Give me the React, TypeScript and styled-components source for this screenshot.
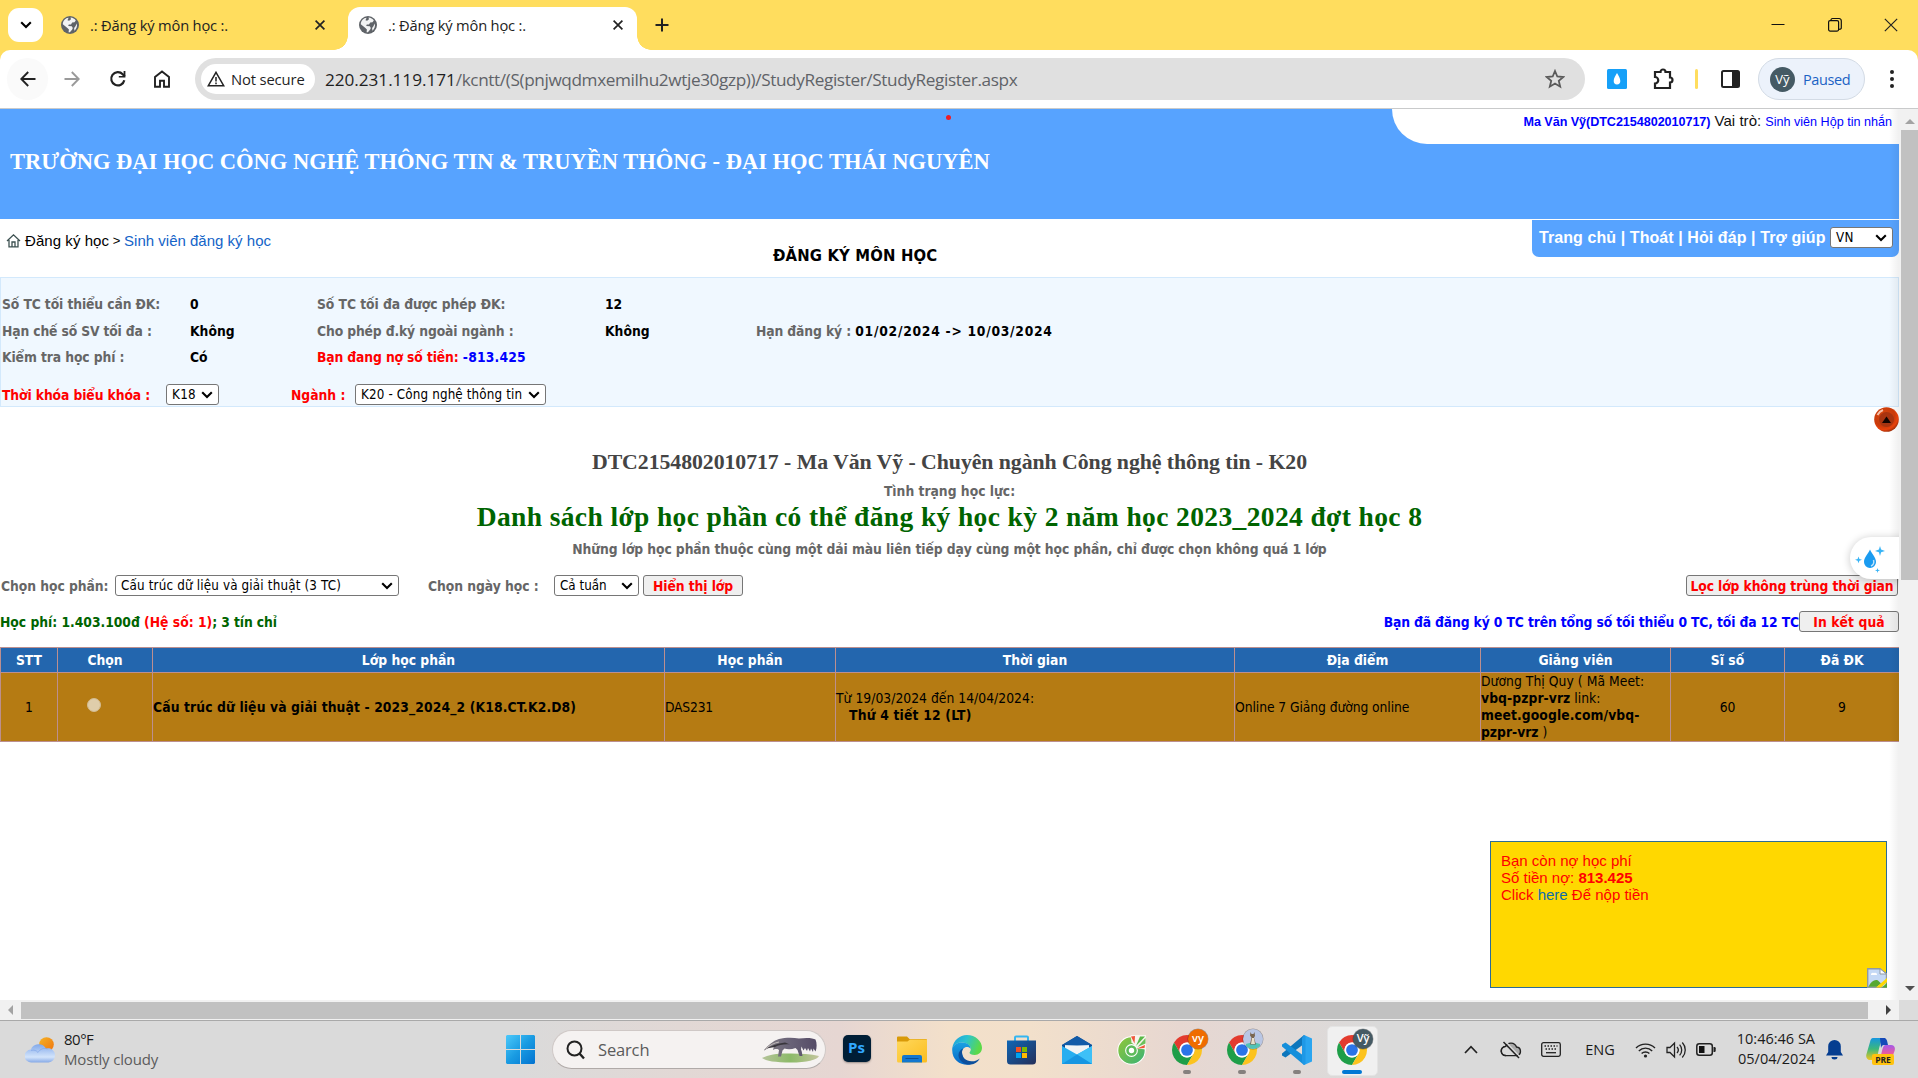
import React from 'react';
import styled, { createGlobalStyle, css } from 'styled-components';

const tahoma = `"DejaVu Sans Condensed", "DejaVu Sans", sans-serif`;
const segoe = `"Open Sans", "Noto Sans", sans-serif`;
const arial = `"Liberation Sans", sans-serif`;
const times = `"Liberation Serif", serif`;

const Global = createGlobalStyle`
  * { box-sizing: border-box; }
  html, body { margin: 0; padding: 0; overflow: hidden; background: #fff; }
  svg { display: block; flex: none; }
`;

type Spaced = { $ls?: number };
const spacing = css<Spaced>`letter-spacing: ${(p) => p.$ls ?? 0}px; white-space: nowrap;`;

const Screen = styled.div`
  width: 1918px; height: 1078px; display: flex; flex-direction: column; overflow: hidden;
`;

/* ---------- browser tabs ---------- */
const TabStrip = styled.div`
  height: 50px; background: #ffdd5e; display: flex; align-items: flex-start; flex: none;
`;
const TabSearch = styled.div`
  width: 35px; height: 34px; margin: 8px 0 0 8px; border-radius: 11px; background: #fff;
  display: flex; align-items: center; justify-content: center;
`;
const Tab = styled.div<{ $active?: boolean; $w: number; $ml: number }>`
  position: relative; width: ${(p) => p.$w}px; height: 43px; margin: 7px 0 0 ${(p) => p.$ml}px; padding: 0 14px 7px 11px;
  display: flex; align-items: center; gap: 11px;
  ${(p) => p.$active && css`
    background: #fff; border-radius: 12px 12px 0 0;
    &::before, &::after { content: ''; position: absolute; bottom: 0; width: 14px; height: 14px; }
    &::before { left: -14px; background: radial-gradient(circle at 0 0, transparent 13.5px, #fff 14px); }
    &::after { right: -14px; background: radial-gradient(circle at 100% 0, transparent 13.5px, #fff 14px); }
  `}
`;
const TabTitle = styled.span<Spaced>`font: 14.7px ${segoe}; color: #222; flex: 1; ${spacing}`;
const WindowButtons = styled.div`
  margin-left: auto; height: 50px; display: flex; align-items: center; gap: 41px; padding-right: 20px;
`;
const NewTab = styled.div`margin: 17px 0 0 17px;`;

/* ---------- toolbar ---------- */
const ToolbarBack = styled.div`background: #ffdd5e; height: 59px; flex: none;`;
const Toolbar = styled.div`
  height: 59px; background: #fff; border-bottom: 1px solid #c9cacb; border-radius: 10px 10px 0 0;
  display: flex; align-items: center; padding-left: 7px;
`;
const NavButton = styled.div<{ $w: number; $bg?: string }>`
  width: ${(p) => p.$w}px; height: 42px; border-radius: 21px; background: ${(p) => p.$bg ?? 'transparent'};
  display: flex; align-items: center; justify-content: center; flex: none;
`;
const Omnibox = styled.div`
  width: 1390px; height: 42px; border-radius: 21px; background: #e0e0e0; display: flex; align-items: center;
  padding: 0 20px 0 6px; margin-left: 10px; flex: none;
`;
const SecureChip = styled.div`
  width: 114px; height: 30px; border-radius: 15px; background: #fff; display: flex; align-items: center; gap: 6px; padding-left: 6px;
`;
const ChipText = styled.span<Spaced>`font: 14.8px ${segoe}; color: #1f1f1f; ${spacing}`;
const Url = styled.span<Spaced>`font: 17.2px ${segoe}; color: #5f6368; margin-left: 10px; flex: 1; padding-top: 1px; ${spacing}`;
const UrlHost = styled.span<Spaced>`color: #1f1f1f; ${spacing}`;
const UrlPath = styled.span<Spaced>`${spacing}`;
const Extensions = styled.div`display: flex; align-items: center; margin-left: 22px; flex: 1;`;
const ExtIcon = styled.div<{ $ml: number }>`margin-left: ${(p) => p.$ml}px;`;
const Divider = styled.i`width: 3px; height: 20px; background: #ffdd5e; border-radius: 2px; margin: 0 23px 0 20px;`;
const Profile = styled.div`
  width: 107px; height: 42px; border-radius: 21px; border: 1px solid #d3dbe5; background: #ecf2fb; margin-left: 18px;
  display: flex; align-items: center; padding-left: 11px; gap: 8px;
`;
const Avatar = styled.div`
  width: 25px; height: 25px; border-radius: 50%; background: #455a64; color: #fff; font: 13px/24px ${segoe}; text-align: center;
`;
const Paused = styled.span<Spaced>`font: 14.5px ${segoe}; color: #1b62c4; ${spacing}`;

/* ---------- viewport ---------- */
const Viewport = styled.div`display: flex; height: 891px; flex: none;`;
const Page = styled.div`position: relative; width: 1899px; background: #fff; font-family: ${tahoma}; overflow: hidden;`;
const EdgeShade = styled.div`
  position: absolute; top: 0; right: 0; bottom: 0; width: 10px; background: linear-gradient(90deg, rgba(0,0,0,0), rgba(0,0,0,.06));
`;
const Banner = styled.header`height: 110px; background: #57a3ff; display: flex; justify-content: space-between; align-items: flex-start;`;
const SchoolName = styled.h1<Spaced>`margin: 39px 0 0 10px; font: bold 22.5px/28px ${times}; color: #fff; ${spacing}`;
const UserBox = styled.div`
  width: 507px; height: 35px; background: #fff; border-radius: 0 0 0 35px; display: flex; justify-content: flex-end;
  align-items: baseline; padding: 3px 7px 0 0; gap: 4px; font: 12.6px/18px ${arial}; color: #0000ff;
`;
const UserName = styled.b<Spaced>`${spacing}`;
const Role = styled.span<Spaced>`font-size: 15px; color: #111; ${spacing}`;
const UserLink = styled.span<Spaced>`${spacing}`;
const RedDot = styled.i`position: absolute; left: 946px; top: 6px; width: 5px; height: 5px; border-radius: 50%; background: #ee1c25;`;

const SubHeader = styled.div`height: 58px; display: flex; align-items: flex-start;`;
const Crumbs = styled.div`
  width: 773px; display: flex; align-items: center; padding: 11px 0 0 6px; height: 31px; font: 15px ${arial}; color: #000; flex: none;
`;
const CrumbIcon = styled.div`width: 19px;`;
const Crumb = styled.span<Spaced & { $link?: boolean }>`color: ${(p) => (p.$link ? '#1464c8' : '#000')}; ${spacing}`;
const CrumbSep = styled.span`width: 15px; text-align: center; font-size: 13px;`;
const PageTitle = styled.h2<Spaced>`margin: 25px 0 0; font: bold 16.5px/23px ${tahoma}; color: #000; ${spacing}`;
const NavSide = styled.div`flex: 1 1 0; display: flex; justify-content: flex-end;`;
const TopNav = styled.nav`
  width: 367px; height: 37px; margin-top: 1px; background: #57a3ff; border-radius: 0 0 7px 7px; display: flex; align-items: center;
  justify-content: space-between; padding: 0 6px 2px 7px;
`;
const NavText = styled.span<Spaced>`font: bold 16px ${arial}; color: #fff; ${spacing}`;

const Select = styled.div<{ $w: number }>`
  width: ${(p) => p.$w}px; height: 21px; border: 1px solid #767676; border-radius: 3px; background: #fff; color: #000;
  display: flex; align-items: center; justify-content: space-between; padding: 0 5px 0 5px; font: 13.3px/18px ${tahoma}; flex: none;
`;
const SelectText = styled.span<Spaced>`${spacing}`;

const InfoPanel = styled.section`
  height: 130px; background: #f0f8ff; border: 1px solid #d3e9fc; padding: 13px 0 0 1px; font: bold 13.75px/26px ${tahoma}; color: #666;
`;
const InfoGrid = styled.div`display: grid; grid-template-columns: 188px 127px 288px 151px 1fr; grid-template-rows: 27px 26px 26px;`;
const Label = styled.span<Spaced & { $c?: string }>`color: ${(p) => p.$c ?? '#666'}; font-weight: bold; ${spacing}`;
const FilterLine = styled.div`display: flex; align-items: center; height: 21px; margin-top: 14px;`;
const Slot = styled.div<{ $w: number; $pl?: number }>`
  width: ${(p) => p.$w}px; padding-left: ${(p) => p.$pl ?? 0}px; flex: none; display: flex; align-items: center;
`;

const Headings = styled.section`display: flex; flex-direction: column; align-items: center; padding-top: 41px; height: 168px;`;
const StudentLine = styled.h3<Spaced>`margin: 0; font: bold 21.8px/28px ${times}; color: #444; ${spacing}`;
const Note = styled.p<Spaced & { $mt: number }>`margin: ${(p) => p.$mt}px 0 0; font: bold 13.75px/17px ${tahoma}; color: #666; ${spacing}`;
const ListTitle = styled.h3<Spaced>`margin: -1px 0 0; font: bold 27.5px/35px ${times}; color: #006400; ${spacing}`;

const Row = styled.div<{ $h: number; $mt?: number }>`
  height: ${(p) => p.$h}px; margin-top: ${(p) => p.$mt ?? 0}px; display: flex; align-items: center; font: bold 13.75px ${tahoma};
`;
const Push = styled.i`flex: 1;`;
const PushButton = styled.button<Spaced & { $w: number; $ml?: number; $mr?: number }>`
  width: ${(p) => p.$w}px; height: 21px; margin: 0 ${(p) => p.$mr ?? 0}px 0 ${(p) => p.$ml ?? 0}px; padding: 0; border: 1px solid #767676;
  border-radius: 3px; background: #efefef; color: #ff0000; font: bold 13.75px/18px ${tahoma}; ${spacing}
`;

const Table = styled.table`
  width: 1899px; margin-top: 15px; border-collapse: collapse; table-layout: fixed; font: 13.75px/17px ${tahoma}; color: #000;
  th, td { border: 1px solid #bc8f8f; padding: 0; }
  th { height: 25px; background: #2366ae; color: #fff; font-weight: bold; }
  td { height: 69px; background: #b57b13; }
`;
const Cell = styled.td<{ $center?: boolean }>`text-align: ${(p) => (p.$center ? 'center' : 'left')};`;
const CellText = styled.span<Spaced & { $bold?: boolean; $indent?: number }>`
  font-weight: ${(p) => (p.$bold ? 'bold' : 'normal')}; margin-left: ${(p) => p.$indent ?? 0}px; ${spacing}
`;
const Radio = styled.i`
  display: inline-block; width: 14px; height: 14px; margin: 0 22px 5px 0; border-radius: 50%; background: #dfcdaa;
  border: 1px solid #d3bb90; vertical-align: middle;
`;

const ToTop = styled.div`position: absolute; left: 1874px; top: 298px;`;
const Assist = styled.div`
  position: absolute; left: 1850px; top: 428px; width: 60px; height: 42px; border-radius: 21px 0 0 21px; background: #fff;
  box-shadow: 0 1px 8px rgba(0,0,0,.22); padding: 9px 0 0 5px;
`;
const Debt = styled.aside`
  position: absolute; left: 1490px; top: 732px; width: 397px; height: 147px; background: #ffd800; border: 1px solid #2c6c96;
  padding: 10px 0 0 10px; font: 15px/17px ${arial}; color: #ff0000;
`;
const DebtLine = styled.div<Spaced>`${spacing} width: max-content;`;
const DebtLink = styled.span`color: #0d6ca8;`;
const Broken = styled.div`position: absolute; right: -1px; bottom: -1px;`;

/* ---------- scrollbars ---------- */
const VBar = styled.div`width: 19px; background: #f1f1f1; display: flex; flex-direction: column; align-items: center; padding: 7px 0 7px 2px;`;
const VThumb = styled.div`width: 17px; height: 450px; background: #c1c1c1; margin: 4px 0 auto;`;
const HBar = styled.div`height: 20px; background: #f1f1f1; display: flex; align-items: center; flex: none; padding-left: 6px;`;
const HThumb = styled.div`width: 1847px; height: 17px; background: #c1c1c1; margin: 0 15px 0 5px;`;
const Corner = styled.div`width: 19px; height: 20px; background: #dcdcdc; margin-left: auto;`;

/* ---------- taskbar ---------- */
const Taskbar = styled.div`
  position: relative; height: 58px; border-top: 1px solid #a9a9a9; display: flex; align-items: center; flex: none;
  background: linear-gradient(90deg, #dadada 0, #dadada 520px, #e2d8d5 680px, #e6d6d2 840px, #f3e0ca 950px, #f2e0cb 1030px, #e7d7d1 1180px, #e0d9d7 1280px, #dadada 1380px);
`;
const Weather = styled.div`width: 493px; padding-left: 25px; display: flex; align-items: center; gap: 9px; flex: none;`;
const WeatherText = styled.div`font: 15px/20px ${segoe}; padding-bottom: 1px;`;
const WeatherLine = styled.div<Spaced & { $dim?: boolean }>`color: ${(p) => (p.$dim ? '#5c5c5c' : '#1b1b1b')}; ${spacing} width: max-content;`;
const SearchBox = styled.div`
  width: 274px; height: 39px; margin: 0 3px 0 4px; border-radius: 20px; background: #f5f2f1; border: 1px solid #cfc8c6; border-bottom-color: #b0aaa8;
  display: flex; align-items: center; padding: 0 6px 0 13px; flex: none;
`;
const SearchText = styled.span<Spaced>`font: 16.5px ${segoe}; color: #5b5b5b; margin-left: 13px; flex: 1; ${spacing}`;
const AppSlot = styled.div<{ $active?: boolean }>`
  position: relative; width: 55px; height: 57px; display: flex; align-items: center; justify-content: center; flex: none;
  ${(p) => p.$active && css`
    &::before { content: ''; position: absolute; left: 3px; top: 5px; width: 49px; height: 48px; border-radius: 5px; background: #f0f0f0; border: 1px solid #e4e4e4; }
  `}
  svg { position: relative; }
`;
const Running = styled.i<{ $active?: boolean }>`
  position: absolute; bottom: 4px; left: 50%; width: ${(p) => (p.$active ? 20 : 8)}px; height: 4px;
  margin-left: ${(p) => (p.$active ? -10 : -4)}px; border-radius: 2px; background: ${(p) => (p.$active ? '#0078d4' : '#85807e')};
`;
const Badge = styled.div<{ $bg: string }>`
  position: absolute; left: 29px; top: 8px; width: 20px; height: 20px; border-radius: 50%; background: ${(p) => p.$bg}; color: #fff;
  font: 600 11px/18px ${segoe}; text-align: center; overflow: hidden; box-shadow: 0 0 0 .5px rgba(0,0,0,.3);
`;
const PsTile = styled.div`
  width: 28px; height: 27px; margin-bottom: 2px; border-radius: 5px; background: #001e36; color: #31a8ff; font: bold 15px/25px ${segoe};
  text-align: center; box-shadow: 0 1px 2px rgba(0,0,0,.35);
`;
const Tray = styled.div`margin-left: auto; display: flex; align-items: center; padding-right: 11px; font: 14.5px ${segoe}; color: #1b1b1b;`;
const TrayItem = styled.div<{ $w: number }>`position: relative; width: ${(p) => p.$w}px; display: flex; justify-content: center; flex: none;`;
const Clock = styled.div`width: 94px; line-height: 20px; display: flex; flex-direction: column; align-items: flex-end; padding-bottom: 1px;`;
const ClockLine = styled.div<Spaced>`${spacing}`;
const Pre = styled.span`
  position: absolute; left: 19px; bottom: -3px; width: 22px; height: 11px; border-radius: 2px; background: #ffc20e; color: #222;
  font: bold 8.5px/11px ${segoe}; text-align: center;
`;

/* ---------- icons ---------- */
const Globe = () => (
  <svg width="18" height="18" viewBox="0 0 18 18"><circle cx="9" cy="9" r="9" fill="#5f6368" />
    <path d="M9.500 1.600c2.300.2 4.200 1.300 5.300 3L13.500 6.200l-2.300.3-1.200 2H7.800l-.6 1.500 3.600.3 1 1.700-.6 1.400-2.300 2.900-1.300-.1.3-2.600-1.500-1.700-4.600-3.600C1.700 4.500 4.700 2 7.600 1.700L6.500 4.200l1.600.6 1.900-1.500zM15.800 7.500c.7 2.800-.4 5.600-2.400 7.200l-.3-2.600 1.200-1.500z" fill="#fff" opacity=".92" /></svg>
);
const Cross = ({ s = 10, w = 1.7 }) => (
  <svg width={s} height={s} viewBox="0 0 10 10"><path d="M.6.6l8.800 8.800M9.400.6L.6 9.400" stroke="#222" strokeWidth={(w * 10) / s} fill="none" /></svg>
);
const Chev = () => (
  <svg width="12" height="8" viewBox="0 0 12 8"><path d="M1.200 1.300L6 6l4.800-4.700" stroke="#000" strokeWidth="2.100" fill="none" /></svg>
);
const BackArrow = () => (
  <svg width="16" height="16" viewBox="0 0 16 16"><path d="M15.500 8H1.500M8.200 1L1.300 8l6.900 7" stroke="#222" strokeWidth="1.900" fill="none" /></svg>
);
const ForwardArrow = () => (
  <svg width="16" height="16" viewBox="0 0 16 16"><path d="M.5 8h14M7.800 1l6.900 7-6.900 7" stroke="#9a9a9a" strokeWidth="1.900" fill="none" /></svg>
);
const Chrome = () => (
  <svg width="30" height="30" viewBox="2 2 44 44">
    <path fill="#e33b2e" d="M4.950 13A22 22 0 0 1 43.050 13L24 13A11 11 0 0 0 14.470 29.500Z" />
    <path fill="#1e9e48" d="M4.950 13L14.470 29.500A11 11 0 0 0 33.530 29.500L24 46A22 22 0 0 1 4.950 13" />
    <path fill="#fcc31e" d="M43.050 13A22 22 0 0 1 24 46L33.530 29.500A11 11 0 0 0 24 13Z" />
    <circle cx="24" cy="24" r="11" fill="#fff" /><circle cx="24" cy="24" r="8.600" fill="#2b74e8" /></svg>
);
const Triangle = ({ d, c }: { d: string; c: string }) => (
  <svg width="10" height="10" viewBox="0 0 10 10"><path d={d} fill={c} /></svg>
);
const WeatherIcon = () => (
  <svg width="30" height="26" viewBox="0 0 30 26">
    <defs>
      <linearGradient id="sun" x1="0" y1="0" x2="1" y2="1"><stop offset="0" stopColor="#f5b324" /><stop offset="1" stopColor="#f0730f" /></linearGradient>
      <linearGradient id="cl" x1="0" y1="0" x2="0" y2="1"><stop offset="0" stopColor="#82a9ea" /><stop offset=".7" stopColor="#d3e4fb" /><stop offset="1" stopColor="#86a9e6" /></linearGradient>
    </defs>
    <circle cx="21.500" cy="7.500" r="7.300" fill="url(#sun)" />
    <path d="M6.500 25.500a6.500 6.500 0 0 1-.7-13A8.500 8.500 0 0 1 21 11.500a7 7 0 0 1 9 7 7 7 0 0 1-6.500 7z" fill="url(#cl)" />
    <path d="M6 13.500c3-1 5.500 0 7 2 2-3.500 6-5 9.500-3.500" fill="none" stroke="#7ba2e6" strokeWidth="1" opacity=".6" />
  </svg>
);
const WindowsLogo = () => (
  <svg width="29" height="29" viewBox="0 0 29 29">
    <defs><linearGradient id="win" x1="0" y1="0" x2="1" y2="1"><stop offset="0" stopColor="#4cc9fa" /><stop offset=".5" stopColor="#199be2" /><stop offset="1" stopColor="#0272d0" /></linearGradient></defs>
    <path d="M1 0h13v14H0V1zM15 0h13l1 1v13H15zM0 15h14v14H1l-1-1zM15 15h14v13l-1 1H15z" fill="url(#win)" />
  </svg>
);
const Magnifier = () => (
  <svg width="19" height="20" viewBox="0 0 19 20"><circle cx="8.500" cy="8.500" r="7" fill="none" stroke="#222" strokeWidth="2" /><path d="M13.500 13.500l4.500 5" stroke="#222" strokeWidth="2.400" /></svg>
);
const Anteater = () => (
  <svg width="57" height="28" viewBox="0 0 57 28">
    <defs><linearGradient id="ant" x1="0" y1="0" x2="1" y2="0"><stop offset="0" stopColor="#807b80" /><stop offset=".45" stopColor="#6b6579" /><stop offset="1" stopColor="#554b66" /></linearGradient>
      <linearGradient id="hill" x1="0" y1="0" x2="1" y2="0"><stop offset="0" stopColor="#b5c39a" /><stop offset=".5" stopColor="#8cba68" /><stop offset="1" stopColor="#c4c59e" /></linearGradient></defs>
    <path d="M0 22c7-4 19-5 29-4.500 10 .2 20 .5 28 2.500-2 4-12 6.500-28 6.500S4 25 0 22z" fill="url(#hill)" />
    <path d="M2 14C6 9 11 5 17 3c6-1.500 14-1.500 20-.5 8-1 14-.5 16.500 1C55 7 55 12 53.500 15.500l-2-3-.5 3.500-2-3.500-1 3-2-3.500-1 3-2-3-1.500 2.500-2-4-.5 3c1 2 1 4 1.500 6.500h-3l-2-6-2-2c-4 1.500-8 1.500-11 .5l-2 2-1.500 6H16l1-6.500-1.500-1L13 13l-2 1 1-4C9 10.500 5 12.500 2.500 14.500z" fill="url(#ant)" />
    <path d="M4 12.500C9 10 15 7.500 23 6.500l5 2c-6-.5-11 .5-15 2.500z" fill="#39363c" /><path d="M4 12.500c4-3.500 8-5.500 13-6.500" stroke="#c3bdba" strokeWidth="1" fill="none" />
  </svg>
);
const Folder = () => (
  <svg width="30" height="27" viewBox="0 0 30 27">
    <defs><linearGradient id="fold" x1="0" y1="0" x2="1" y2="1"><stop offset="0" stopColor="#ffd85c" /><stop offset="1" stopColor="#fbbd1f" /></linearGradient></defs>
    <path d="M0 1.500Q0 .5 1 .5h9L12.500 3H29q1 0 1 1v6H0z" fill="#d99a08" /><path d="M0 5.500h10.500L13 3.500h17V25q0 1.500-1.500 1.500h-27Q0 26.500 0 25z" fill="url(#fold)" />
    <path d="M5 26.500V21q0-2 2-2h16q2 0 2 2v5.500z" fill="#1277cf" /><path d="M8.500 22.500h13" stroke="#0a4f94" strokeWidth="1" />
  </svg>
);
const Edge = () => (
  <svg width="30" height="30" viewBox="0 0 30 30">
    <defs>
      <linearGradient id="e1" x1="0" y1="0" x2="1" y2=".3"><stop offset="0" stopColor="#1b9de0" /><stop offset=".5" stopColor="#2cc3cf" /><stop offset="1" stopColor="#5bd949" /></linearGradient>
      <linearGradient id="e2" x1="0" y1="0" x2="0" y2="1"><stop offset="0" stopColor="#1aa1e2" /><stop offset="1" stopColor="#0667c6" /></linearGradient>
    </defs>
    <path d="M.3 13C1.500 5.500 7.500 0 15 0c8.500 0 15 6.300 15 12.800 0 4.200-3.200 7.200-7.200 7.200-3.500 0-5.300-1.200-5.300-2.300 0-.8 1.300-1.400 1.300-3.500C18.800 10.500 14.800 7.500 10 7.500 5.800 7.500 2.300 9.500.3 13z" fill="url(#e1)" />
    <path d="M.3 13C2 9.500 5.800 7.500 10 7.500c4.800 0 8.800 2.800 8.800 6.500-1-1.500-2.400-2-3.800-2-3 0-5 2.300-5 5.300C10 22 13.500 28 19 29.400 10 31.500-1 26 .3 13z" fill="url(#e2)" />
    <path d="M11.500 13.300C10.500 14.400 10 15.800 10 17.300c0 5.200 4 9 9.500 9 3.800 0 6.500-1.500 8.300-2.900C25.800 27 22.500 29 19 29.400c-5.500 1-12-3-12.500-9-.2-3 2-6 5-7.100z" fill="#0c4f9c" />
  </svg>
);
const Store = () => (
  <svg width="29" height="30" viewBox="0 0 29 30">
    <defs><linearGradient id="st" x1="0" y1="0" x2="1" y2="1"><stop offset="0" stopColor="#0e66b5" /><stop offset="1" stopColor="#252f5a" /></linearGradient></defs>
    <path d="M8 6V2.500Q8 1.500 9 1.500h11q1 0 1 1V6" fill="none" stroke="#35b6f1" strokeWidth="2" /><path d="M0 5.500h29V26q0 3.500-3.500 3.500h-22Q0 29.500 0 26z" fill="url(#st)" />
    <path d="M9 12h5v5H9z" fill="#f25022" /><path d="M15 12h5v5h-5z" fill="#7fba00" /><path d="M9 18h5v5H9z" fill="#00a4ef" /><path d="M15 18h5v5h-5z" fill="#ffb900" />
  </svg>
);
const Mail = () => (
  <svg width="30" height="28" viewBox="0 0 30 28">
    <path d="M0 9L15 0l15 9v4H0z" fill="#0e4e96" /><path d="M3 9h24v9H3z" fill="#f2f4f5" /><path d="M0 10l15 8.500L30 10v18H0z" fill="#27aef0" /><path d="M30 10v18L15 18.500z" fill="#3ec0f7" /><path d="M0 28l15-9.500L30 28z" fill="#1796e2" /><path d="M15 0L30 9l-15 .5L0 9z" fill="#125ba8" />
  </svg>
);
const CocCoc = () => (
  <svg width="30" height="30" viewBox="0 0 30 30">
    <defs><linearGradient id="cc" x1="0" y1="0" x2="1" y2="1"><stop offset="0" stopColor="#86c440" /><stop offset="1" stopColor="#45b56e" /></linearGradient></defs>
    <circle cx="14.500" cy="15.500" r="14.200" fill="#fff" />
    <circle cx="14.500" cy="15.500" r="9.800" fill="none" stroke="url(#cc)" strokeWidth="6.800" />
    <path d="M13.500 0h15.500v14.500l-8-1-6.500-6z" fill="#f8f3ec" />
    <circle cx="14.500" cy="15.500" r="4" fill="none" stroke="#5dbb5a" strokeWidth="2.600" />
    <path d="M14 1.500l4-.5-.5 7.500zM28 10l-.5 3-7.500.5z" fill="#f0563a" /><path d="M23 1.500l5 0-9 9.500z" fill="#56b947" /><path d="M28.500 3v5.500L20.500 12z" fill="#6cc15a" />
  </svg>
);
const VsCode = () => (
  <svg width="30" height="30" viewBox="0 0 30 30">
    <path d="M22 0L30 3.500v23L22 30z" fill="#2aa5f0" /><path d="M22 0v9L3.500 22.500 0 20.500v-2z" fill="#0d76bc" /><path d="M22 30v-9L3.500 7.500 0 9.500v2z" fill="#158fdb" /><path d="M22 0l1.500 1v28L22 30 20 27V3z" fill="#1e98e6" />
  </svg>
);
const Copilot = () => (
  <svg width="29" height="24" viewBox="0 0 29 24">
    <defs>
      <linearGradient id="c1" x1="0" y1="0" x2="0" y2="1"><stop offset="0" stopColor="#1596e0" /><stop offset=".5" stopColor="#3db87a" /><stop offset="1" stopColor="#f2c61e" /></linearGradient>
      <linearGradient id="c2" x1="0" y1="0" x2="0" y2="1"><stop offset="0" stopColor="#a45ae8" /><stop offset=".5" stopColor="#e95ba0" /><stop offset="1" stopColor="#f5873a" /></linearGradient>
    </defs>
    <path d="M7 0h10c-2 3-3.500 8-4.500 13-1 5-2 9-5 9H4C1 22-.5 19.500.5 16L4 4c.6-2.500 1.500-4 3-4z" fill="url(#c1)" />
    <path d="M14 0h4c2.500 0 3 2 4 7h-4c-1.500 0-2.500 1-3 3z" fill="#1449b8" />
    <path d="M22 24H12c2-3 3-7 4-11 1.200-5 2-6 4-6h5c3 0 4.500 2 3.700 5.500L26 20c-.7 2.500-2 4-4 4z" fill="url(#c2)" />
  </svg>
);

const DropDown = ({ w, ls, children }: { w: number; ls?: number; children: React.ReactNode }) => (
  <Select $w={w}><SelectText $ls={ls}>{children}</SelectText><Chev /></Select>
);

const cols = [57, 95, 512, 171, 399, 246, 190, 114, 115];
const heads = ['STT', 'Chọn', 'Lớp học phần', 'Học phần', 'Thời gian', 'Địa điểm', 'Giảng viên', 'Sĩ số', 'Đã ĐK'];

export default function App() {
  return (
    <Screen>
      <Global />
      <TabStrip>
        <TabSearch><Chev /></TabSearch>
        <Tab $w={289} $ml={7}><Globe /><TabTitle $ls={-0.18}>.: Đăng ký môn học :.</TabTitle><Cross /></Tab>
        <Tab $w={289} $ml={9} $active><Globe /><TabTitle $ls={-0.18}>.: Đăng ký môn học :.</TabTitle><Cross /></Tab>
        <NewTab><svg width="16" height="16" viewBox="0 0 16 16"><path d="M8 1.500v13M1.500 8h13" stroke="#222" strokeWidth="2" /></svg></NewTab>
        <WindowButtons>
          <svg width="16" height="14" viewBox="0 0 16 14"><path d="M1.500 6.500h13" stroke="#111" strokeWidth="1" /></svg>
          <svg width="16" height="16" viewBox="0 0 16 16"><g fill="none" stroke="#111" strokeWidth="1.200"><rect x="1.600" y="3.600" width="10" height="10.500" rx="1.500" /><path d="M4 3.500V3a1.500 1.500 0 0 1 1.500-1.500H12A2.500 2.500 0 0 1 14.300 4v6.500A1.500 1.500 0 0 1 12 12" /></g></svg>
          <Cross s={14} w={1.2} />
        </WindowButtons>
      </TabStrip>
      <ToolbarBack>
        <Toolbar>
          <NavButton $w={41} $bg="#fafafa"><BackArrow /></NavButton>
          <NavButton $w={48}><ForwardArrow /></NavButton>
          <NavButton $w={43}><svg width="18" height="18" viewBox="0 0 18 18"><path d="M15.300 10.200A6.600 6.600 0 1 1 13.700 4.300L15.800 6.500" fill="none" stroke="#222" strokeWidth="2.200" /><path d="M16.400 1v6.600H9.800V6h4.800V1z" fill="#222" /></svg></NavButton>
          <NavButton $w={46}><svg width="18" height="18" viewBox="0 0 18 18"><path d="M2 16.800V7L9 1.500 16 7v9.800h-5v-6H7v6z" fill="none" stroke="#222" strokeWidth="1.900" /></svg></NavButton>
          <Omnibox>
            <SecureChip>
              <svg width="18" height="16" viewBox="0 0 18 16"><path d="M9 1.300L16.800 14.800H1.200z" fill="none" stroke="#222" strokeWidth="1.500" /><path d="M9 6v4.500M9 11.500v1.700" stroke="#222" strokeWidth="1.500" /></svg>
              <ChipText $ls={-0.15}>Not secure</ChipText>
            </SecureChip>
            <Url><UrlHost $ls={-0.05}>220.231.119.171</UrlHost><UrlPath $ls={-0.38}>/kcntt/(S(pnjwqdmxemilhu2wtje30gzp))/StudyRegister/StudyRegister.aspx</UrlPath></Url>
            <svg width="20" height="20" viewBox="0 0 20 20"><path d="M10 2l2.300 5.500 6 .5-4.500 3.900 1.400 5.800L10 14.600l-5.200 3.100 1.400-5.800L1.700 8l6-.5z" fill="none" stroke="#5a5a5a" strokeWidth="1.800" /></svg>
          </Omnibox>
          <Extensions>
            <svg width="20" height="20" viewBox="0 0 20 20"><rect width="20" height="20" rx="1.500" fill="#16a0f8" /><path d="M10 4c1.500 3 3.300 5 3.300 8a3.300 3.500 0 0 1-6.600 0c0-3 1.800-5 3.300-8z" fill="#fff" /></svg>
            <ExtIcon $ml={25}><svg width="23" height="22" viewBox="0 0 23 22"><path d="M3 4h5.500a2.500 2.500 0 0 1 5 0H18v5.500a2.500 2.500 0 0 1 0 5V20H3v-4.500a3.200 3.200 0 0 0 0-6.500z" fill="none" stroke="#222" strokeWidth="2.200" /></svg></ExtIcon>
            <Divider />
            <svg width="19" height="18" viewBox="0 0 19 18"><rect x="1" y="1" width="17" height="16" rx="1.500" fill="none" stroke="#222" strokeWidth="2" /><path d="M11 1h7v16h-7z" fill="#222" /></svg>
            <Profile><Avatar>Vỹ</Avatar><Paused $ls={-0.4}>Paused</Paused></Profile>
            <ExtIcon $ml={25}><svg width="4" height="18" viewBox="0 0 4 18"><g fill="#222"><circle cx="2" cy="2" r="2" /><circle cx="2" cy="9" r="2" /><circle cx="2" cy="16" r="2" /></g></svg></ExtIcon>
          </Extensions>
        </Toolbar>
      </ToolbarBack>

      <Viewport>
        <Page>
          <Banner>
            <SchoolName>TRƯỜNG ĐẠI HỌC CÔNG NGHỆ THÔNG TIN &amp; TRUYỀN THÔNG - ĐẠI HỌC THÁI NGUYÊN</SchoolName>
            <UserBox><UserName $ls={-0.05}>Ma Văn Vỹ(DTC2154802010717)</UserName><Role $ls={0.05}>Vai trò:</Role><UserLink>Sinh viên Hộp tin nhắn</UserLink></UserBox>
          </Banner>
          <RedDot />
          <SubHeader>
            <Crumbs>
              <CrumbIcon><svg width="15" height="15" viewBox="0 0 15 15"><path d="M1 8L7.500 1.800 14 8M3 7v6.800h9V7M6 13.500V9h3v4.500" fill="none" stroke="#3d5151" strokeWidth="1.300" /></svg></CrumbIcon>
              <Crumb $ls={0.06}>Đăng ký học</Crumb><CrumbSep>&gt;</CrumbSep><Crumb $ls={0.01} $link>Sinh viên đăng ký học</Crumb>
            </Crumbs>
            <PageTitle $ls={0.15}>ĐĂNG KÝ MÔN HỌC</PageTitle>
            <NavSide>
              <TopNav><NavText $ls={0.08}>Trang chủ | Thoát | Hỏi đáp | Trợ giúp</NavText><DropDown w={63} ls={0.4}>VN</DropDown></TopNav>
            </NavSide>
          </SubHeader>

          <InfoPanel>
            <InfoGrid>
              <Label $ls={-0.11}>Số TC tối thiểu cần ĐK:</Label><Label $c="#000">0</Label><Label $ls={-0.06}>Số TC tối đa được phép ĐK:</Label><Label $c="#000">12</Label><span />
              <Label $ls={-0.15}>Hạn chế số SV tối đa :</Label><Label $c="#000">Không</Label><Label $ls={-0.13}>Cho phép đ.ký ngoài ngành :</Label><Label $c="#000">Không</Label>
              <span><Label $ls={-0.12}>Hạn đăng ký :</Label> <Label $c="#000" $ls={0.73}>01/02/2024 -&gt; 10/03/2024</Label></span>
              <Label $ls={-0.1}>Kiểm tra học phí :</Label><Label $c="#000">Có</Label>
              <span><Label $c="#ff0000" $ls={-0.13}>Bạn đang nợ số tiền:</Label> <Label $c="#0000ff" $ls={0.19}>-813.425</Label></span>
            </InfoGrid>
            <FilterLine>
              <Slot $w={164}><Label $c="#ff0000" $ls={-0.1}>Thời khóa biểu khóa :</Label></Slot>
              <DropDown w={53} ls={0.3}>K18</DropDown>
              <Slot $w={72} /><Slot $w={64}><Label $c="#ff0000">Ngành :</Label></Slot>
              <DropDown w={191} ls={0.14}>K20 - Công nghệ thông tin</DropDown>
            </FilterLine>
          </InfoPanel>

          <Headings>
            <StudentLine $ls={-0.06}>DTC2154802010717 - Ma Văn Vỹ - Chuyên ngành Công nghệ thông tin - K20</StudentLine>
            <Note $mt={7}>Tình trạng học lực:</Note>
            <ListTitle $ls={0.38}>Danh sách lớp học phần có thể đăng ký học kỳ 2 năm học 2023_2024 đợt học 8</ListTitle>
            <Note $mt={7} $ls={-0.09}>Những lớp học phần thuộc cùng một dải màu liên tiếp dạy cùng một học phần, chỉ được chọn không quá 1 lớp</Note>
          </Headings>

          <Row $h={21}>
            <Slot $w={115} $pl={1}><Label $ls={-0.05}>Chọn học phần:</Label></Slot>
            <DropDown w={284} ls={0.17}>Cấu trúc dữ liệu và giải thuật (3 TC)</DropDown>
            <Slot $w={29} /><Slot $w={126}><Label $ls={-0.05}>Chọn ngày học :</Label></Slot>
            <DropDown w={85}>Cả tuần</DropDown>
            <PushButton $w={100} $ml={4} $ls={-0.08}>Hiển thị lớp</PushButton>
            <Push />
            <PushButton $w={212} $mr={1} $ls={-0.11}>Lọc lớp không trùng thời gian</PushButton>
          </Row>
          <Row $h={21} $mt={15}>
            <Label $c="#006400" $ls={-0.02}>Học phí: 1.403.100đ</Label><Label $c="#006400">&nbsp;</Label>
            <Label $c="#ff0000">(Hệ số: 1)</Label><Label $c="#006400" $ls={-0.1}>; 3 tín chỉ</Label>
            <Push />
            <Label $c="#0000ff" $ls={-0.13}>Bạn đã đăng ký 0 TC trên tổng số tối thiểu 0 TC, tối đa 12 TC</Label>
            <PushButton $w={100} $ls={0.1}>In kết quả</PushButton>
          </Row>

          <Table>
            <colgroup>{cols.map((w, i) => <col key={i} width={w} />)}</colgroup>
            <thead><tr>{heads.map((h) => <th key={h}>{h}</th>)}</tr></thead>
            <tbody>
              <tr>
                <Cell $center>1</Cell>
                <Cell $center><Radio /></Cell>
                <Cell><CellText $bold $ls={0.12}>Cấu trúc dữ liệu và giải thuật - 2023_2024_2 (K18.CT.K2.D8)</CellText></Cell>
                <Cell><CellText $ls={-0.2}>DAS231</CellText></Cell>
                <Cell><CellText $ls={0.03}>Từ 19/03/2024 đến 14/04/2024:</CellText><br /><CellText $bold $indent={13} $ls={0.2}>Thứ 4 tiết 12 (LT)</CellText></Cell>
                <Cell><CellText $ls={-0.08}>Online 7 Giảng đường online</CellText></Cell>
                <Cell>
                  <CellText $ls={0.05}>Dương Thị Quy ( Mã Meet:</CellText><br />
                  <CellText $bold $ls={0.08}>vbq-pzpr-vrz</CellText> <CellText>link:</CellText><br />
                  <CellText $bold $ls={0.1}>meet.google.com/vbq-</CellText><br />
                  <CellText $bold>pzpr-vrz</CellText> )
                </Cell>
                <Cell $center>60</Cell><Cell $center>9</Cell>
              </tr>
            </tbody>
          </Table>

          <Debt>
            <DebtLine>Bạn còn nợ học phí</DebtLine>
            <DebtLine>Số tiền nợ: <b>813.425</b></DebtLine>
            <DebtLine>Click <DebtLink>here</DebtLink> Để nộp tiền</DebtLine>
            <Broken>
              <svg width="20" height="20" viewBox="0 0 20 20">
                <path d="M.7.7H13L19.500 6V19.300H.7z" fill="#c5d9f5" stroke="#8f9aa3" strokeWidth="1.400" />
                <path d="M13 .7V6h6.500z" fill="#fff" stroke="#8f9aa3" /><path d="M4 7a2 2 0 0 1 3-2 2 2 0 0 1 3 2z" fill="#fff" />
                <path d="M1.500 18.800C4 13 8 11 11 12.500l3 3-4 3.300z" fill="#56a832" /><path d="M9 19.500L20 10v4l-6 5.500z" fill="#ffd800" /><path d="M15 19.500l5-4.500v4.500z" fill="#56a832" />
              </svg>
            </Broken>
          </Debt>
          <EdgeShade />
          <ToTop>
            <svg width="25" height="25" viewBox="0 0 25 25">
              <defs><radialGradient id="rb" cx=".4" cy=".35" r=".7"><stop offset="0" stopColor="#d9480f" /><stop offset=".6" stopColor="#c83a0a" /><stop offset=".8" stopColor="#e8420c" /><stop offset="1" stopColor="#8f2a08" /></radialGradient></defs>
              <circle cx="12.500" cy="12.500" r="12.300" fill="url(#rb)" /><circle cx="12.500" cy="12.500" r="7.500" fill="#a83410" /><path d="M3.500 8A10 10 0 0 1 9 3" stroke="#f7c0a8" strokeWidth="2" fill="none" />
              <path d="M8 16l4.500-6.500L17 16z" fill="#140400" />
            </svg>
          </ToTop>
          <Assist>
            <svg width="31" height="27" viewBox="0 0 31 27">
              <path d="M15 3.500c2 4.500 6 8 6 12.500a6 6 0 0 1-12 0c0-4.500 4-8 6-12.500z" fill="#1a9bf0" /><path d="M18.500 14c.8 3 0 5-2.500 6" stroke="#bfe4fb" strokeWidth="1.500" fill="none" />
              <path d="M25 0l1.100 3.600L30 5l-3.900 1.300L25 10l-1.100-3.700L20 5l3.900-1.400zM3.500 10.500l.9 2.400 2.600.9-2.600 1-.9 2.500-.9-2.500L0 13.800l2.600-.9zM22.500 22l.6 1.700 1.900.7-1.900.7-.6 1.900-.6-1.900-1.900-.7 1.900-.7z" fill="#38b4f6" />
            </svg>
          </Assist>
        </Page>
        <VBar><Triangle d="M0 8L5 3L10 8Z" c="#a3a3a3" /><VThumb /><Triangle d="M0 3L5 8L10 3Z" c="#505050" /></VBar>
      </Viewport>
      <HBar><Triangle d="M7 0L2 5L7 10Z" c="#a3a3a3" /><HThumb /><Triangle d="M3 0L8 5L3 10Z" c="#404040" /><Corner /></HBar>

      <Taskbar>
        <Weather>
          <WeatherIcon />
          <WeatherText><WeatherLine $ls={-0.5}>80°F</WeatherLine><WeatherLine $dim $ls={-0.15}>Mostly cloudy</WeatherLine></WeatherText>
        </Weather>
        <AppSlot><WindowsLogo /></AppSlot>
        <SearchBox><Magnifier /><SearchText $ls={-0.15}>Search</SearchText><Anteater /></SearchBox>
        <AppSlot><PsTile>Ps</PsTile></AppSlot>
        <AppSlot><Folder /></AppSlot>
        <AppSlot><Edge /></AppSlot>
        <AppSlot><Store /></AppSlot>
        <AppSlot><Mail /></AppSlot>
        <AppSlot><CocCoc /></AppSlot>
        <AppSlot><Chrome /><Badge $bg="#ef6c00">vy</Badge><Running /></AppSlot>
        <AppSlot>
          <Chrome />
          <Badge $bg="#b9c6e4"><svg width="20" height="20" viewBox="0 0 20 20"><path d="M3 15q7-3 14 0v5H3z" fill="#53c3b5" /><path d="M7.500 3l1 2h2l1-2 .5 4-1 1.500 2 7H7l1.500-7L7 6.500z" fill="#7a6650" /><path d="M9 9h2l1 6H8z" fill="#e9dfc9" /></svg></Badge>
          <Running />
        </AppSlot>
        <AppSlot><VsCode /><Running /></AppSlot>
        <AppSlot $active><Chrome /><Badge $bg="#455a64">Vỹ</Badge><Running $active /></AppSlot>
        <Tray>
          <TrayItem $w={40}><svg width="14" height="9" viewBox="0 0 14 9"><path d="M1 8l6-6.300L13 8" fill="none" stroke="#222" strokeWidth="1.700" /></svg></TrayItem>
          <TrayItem $w={40}><svg width="22" height="18" viewBox="0 0 22 18"><path d="M6 14.500a4.500 4.500 0 0 1-.5-9A6 6 0 0 1 16.500 6a4.300 4.300 0 0 1 .5 8.500z" fill="#a9a9a9" stroke="#222" strokeWidth="1.400" /><path d="M2.500 8.500C5 4 9 5.500 17 14H6c-3 0-4.500-3-3.500-5.500z" fill="#dadada" /><path d="M6 14.500a4.500 4.500 0 0 1-.5-9" fill="none" stroke="#222" strokeWidth="1.400" /><path d="M5 0l15 16" stroke="#dadada" strokeWidth="1.500" /><path d="M3.500 1l15.500 16" stroke="#222" strokeWidth="1.500" /></svg></TrayItem>
          <TrayItem $w={40}><svg width="20" height="15" viewBox="0 0 20 15"><rect x=".7" y=".7" width="18.600" height="13.600" rx="1.800" fill="none" stroke="#222" strokeWidth="1.300" /><path d="M3.500 4h13M4.500 7h11" stroke="#222" strokeWidth="1.500" strokeDasharray="1.500 1.500" /><path d="M5 10.700h10" stroke="#222" strokeWidth="1.300" /></svg></TrayItem>
          <TrayItem $w={58}>ENG</TrayItem>
          <TrayItem $w={32}><svg width="21" height="16" viewBox="0 0 21 16"><g fill="none" stroke="#222" strokeWidth="1.400"><path d="M1 6a13.500 13.500 0 0 1 19 0M3.800 8.900a9.500 9.500 0 0 1 13.400 0M6.600 11.600a5.500 5.500 0 0 1 7.800 0" /></g><circle cx="10.500" cy="14" r="1.600" fill="#222" /></svg></TrayItem>
          <TrayItem $w={30}><svg width="21" height="18" viewBox="0 0 21 18"><path d="M1 6.500h3L8.500 2v14L4 11.500H1z" fill="none" stroke="#222" strokeWidth="1.300" /><path d="M11 6a4.500 4.500 0 0 1 0 6M13.600 3.600a8 8 0 0 1 0 10.800M16.300 1.500a11 11 0 0 1 0 15" fill="none" stroke="#222" strokeWidth="1.300" /></svg></TrayItem>
          <TrayItem $w={30}><svg width="20" height="13" viewBox="0 0 20 13"><rect x=".8" y=".8" width="15.500" height="11.400" rx="2.500" fill="none" stroke="#222" strokeWidth="1.500" /><path d="M3 3h5.500v7H3z" fill="#111" /><path d="M17.500 4h1q1.200 0 1.200 1.200v2.600q0 1.200-1.200 1.200h-1z" fill="#222" /></svg></TrayItem>
          <Clock><ClockLine>10:46:46 SA</ClockLine><ClockLine>05/04/2024</ClockLine></Clock>
          <TrayItem $w={38}><svg width="17" height="20" viewBox="0 0 17 20"><path d="M8.500 0a6.300 6.300 0 0 1 6.300 6.300V12l2.200 3.500H0L2.200 12V6.300A6.300 6.300 0 0 1 8.500 0zM5.500 17h6a3 2.500 0 0 1-6 0z" fill="#053d90" /></svg></TrayItem>
          <TrayItem $w={54}><Copilot /><Pre>PRE</Pre></TrayItem>
        </Tray>
      </Taskbar>
    </Screen>
  );
}
